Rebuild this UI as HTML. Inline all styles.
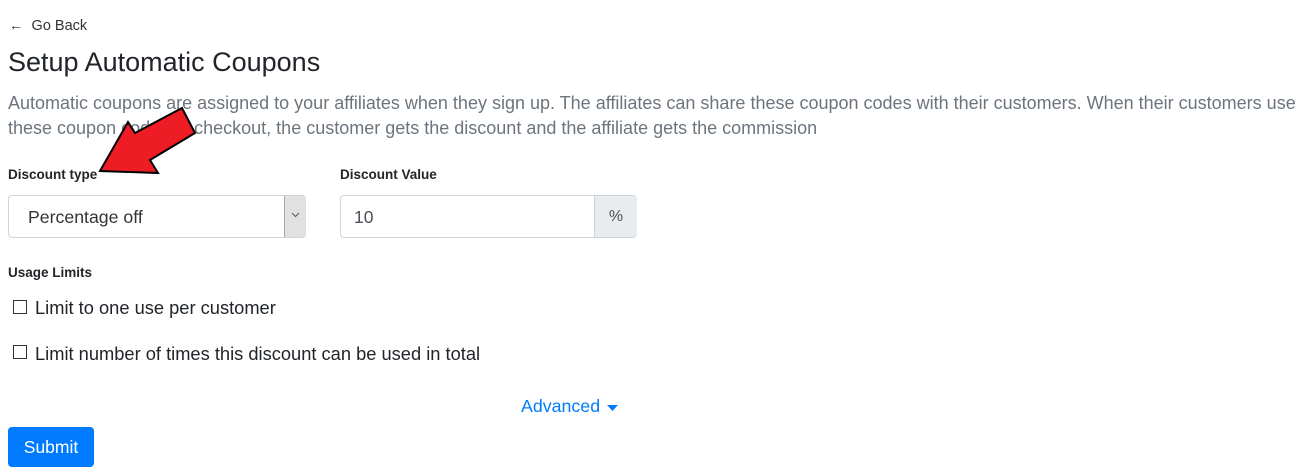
<!DOCTYPE html>
<html><head><style>
body{margin:0;background:#fff;font-family:"Liberation Sans",sans-serif;color:#212529;position:relative;width:1302px;height:476px;overflow:hidden}
.a{position:absolute;white-space:nowrap}
.box{position:absolute;border:1px solid #ced4da;border-radius:4px;box-sizing:border-box;background:#fff}
.cb{position:absolute;width:14px;height:14px;border:1px solid #333;box-sizing:border-box;background:#fff}
</style></head><body>
<div class="a" style="left:9px;top:18px;font-size:14.5px;color:#333">←&nbsp;&nbsp;Go Back</div>
<div class="a" style="left:8px;top:47px;font-size:27px;color:#212529">Setup Automatic Coupons</div>
<div class="a" style="left:8px;top:91px;font-size:18px;line-height:25px;color:#6c757d">Automatic coupons are assigned to your affiliates when they sign up. The affiliates can share these coupon codes with their customers. When their customers use<br>these coupon codes at checkout, the customer gets the discount and the affiliate gets the commission</div>
<div class="a" style="left:8px;top:167px;font-size:13.5px;font-weight:bold">Discount type</div>
<div class="a" style="left:340px;top:167px;font-size:13.5px;font-weight:bold">Discount Value</div>
<div class="box" style="left:8px;top:195px;width:298px;height:43px"></div>
<div class="a" style="left:28px;top:207px;font-size:17.7px;color:#333">Percentage off</div>
<div class="a" style="left:284px;top:196px;width:21px;height:41px;background:#e1e1e1;border-left:1px solid #aaa;border-radius:0 3px 3px 0"><svg width="21" height="41"><path d="M7 17 L10.5 20.5 L14 17" fill="none" stroke="#555" stroke-width="1"/></svg></div>
<div class="box" style="left:340px;top:195px;width:297px;height:43px"></div>
<div class="a" style="left:594px;top:196px;width:42px;height:41px;background:#e9ecef;border-left:1px solid #ced4da;border-radius:0 3px 3px 0;font-size:16px;text-align:center;line-height:41px;color:#495057">%</div>
<div class="a" style="left:354px;top:207px;font-size:17.5px;color:#495057">10</div>
<div class="a" style="left:8px;top:265px;font-size:13.5px;font-weight:bold">Usage Limits</div>
<div class="cb" style="left:13px;top:300px"></div>
<div class="a" style="left:35px;top:297px;font-size:18.3px">Limit to one use per customer</div>
<div class="cb" style="left:13px;top:345px"></div>
<div class="a" style="left:35px;top:343px;font-size:18.3px">Limit number of times this discount can be used in total</div>
<div class="a" style="left:521px;top:396px;font-size:17.8px;color:#007bff">Advanced</div>
<svg class="a" style="left:606px;top:404px" width="14" height="8"><path d="M1 1 L12 1 L6.5 7Z" fill="#007bff"/></svg>
<div class="a" style="left:8px;top:427px;width:86px;height:40px;background:#007bff;border-radius:4px;color:#fff;font-size:17.5px;text-align:center;line-height:40px">Submit</div>
<svg class="a" style="left:0;top:0" width="300" height="200"><polygon points="100,171 128,122 135,133 182,108 195,133 150,160 158,173" fill="#ee1c25" stroke="#000" stroke-width="2" stroke-linejoin="miter"/></svg>
</body></html>
